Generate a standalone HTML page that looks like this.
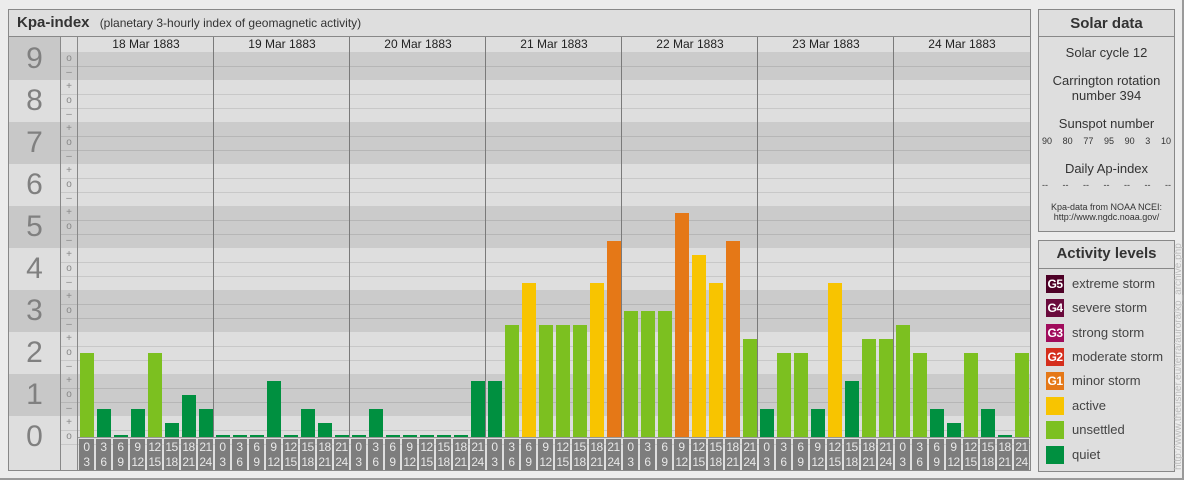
<!DOCTYPE html>
<html><head><meta charset="utf-8"><style>
*{margin:0;padding:0;box-sizing:border-box}
body{width:1184px;height:480px;background:#ececec;position:relative;overflow:hidden;font-family:"Liberation Sans",sans-serif;color:#333}
.a{position:absolute}
.d{background:#cbcbcb linear-gradient(to bottom,#b6b6b6 0 1px,transparent 1px 14px,#b6b6b6 14px 15px,transparent 15px) 0 14px/100% 28px no-repeat}
.l{background:#dedede linear-gradient(to bottom,#c8c8c8 0 1px,transparent 1px 14px,#c8c8c8 14px 15px,transparent 15px) 0 14px/100% 28px no-repeat}
.num{position:absolute;left:9px;width:51px;text-align:center;font-size:30px;color:#808080;line-height:34px}
.sl{position:absolute;left:61px;width:16px;text-align:center;font-size:10px;color:#888;line-height:14px;height:14px}
.vs{position:absolute;top:37px;height:400px;width:1px;background:#7a7a7a}
.dt{position:absolute;top:37px;height:14px;width:136px;text-align:center;font-size:12px;line-height:14px;color:#222}
.row{position:absolute;left:78px;display:flex}
.bars{top:52px;height:385px;align-items:flex-end}
.bars>div{width:17px;padding:0 1px 0 2px}
.bars i{display:block;width:14px}
.q{background:#009040}.u{background:#7cc020}.y{background:#f8c400}.o{background:#e57817}
.tl{top:439px;height:31px}
.tl>div{width:17px;padding-left:1px}
.tl span{display:block;width:15px;height:31px;background:#7d7d7d;color:#e8e8e8;font-size:12px;line-height:15px;text-align:center;padding-top:1px;letter-spacing:-0.5px}
.pc{position:absolute;left:1039px;width:135px;text-align:center;font-size:13px;color:#333}
.lg{position:absolute;left:1046px;width:18px;height:18px;color:#fff;font-size:12px;font-weight:bold;line-height:18px;text-align:center;letter-spacing:-0.5px}
.lt{position:absolute;left:1072px;font-size:13px;color:#444;line-height:18px}
</style></head><body>
<div class="a" style="left:0;top:0;width:1184px;height:480px;border-right:2px solid #9a9a9a;border-bottom:2px solid #9a9a9a"></div>
<div class="a" style="left:8px;top:9px;width:1023px;height:462px;border:1px solid #888;background:#dedede"></div>
<div class="a" style="left:9px;top:36px;width:1021px;height:1px;background:#888"></div>
<div class="a" style="left:17px;top:13px;font-size:15px;font-weight:bold;color:#333;line-height:20px">Kpa-index <span style="font-weight:normal;font-size:12px;margin-left:6px">(planetary 3-hourly index of geomagnetic activity)</span></div>
<div class="a" style="left:9px;top:37px;width:51px;height:43px;background:#c8c8c8"></div>
<div class="a" style="left:9px;top:122px;width:51px;height:42px;background:#c8c8c8"></div>
<div class="a" style="left:9px;top:206px;width:51px;height:42px;background:#c8c8c8"></div>
<div class="a" style="left:9px;top:290px;width:51px;height:42px;background:#c8c8c8"></div>
<div class="a" style="left:9px;top:374px;width:51px;height:42px;background:#c8c8c8"></div>
<div class="a d" style="left:61px;top:52px;width:969px;height:28px"></div>
<div class="a l" style="left:61px;top:80px;width:969px;height:42px"></div>
<div class="a d" style="left:61px;top:122px;width:969px;height:42px"></div>
<div class="a l" style="left:61px;top:164px;width:969px;height:42px"></div>
<div class="a d" style="left:61px;top:206px;width:969px;height:42px"></div>
<div class="a l" style="left:61px;top:248px;width:969px;height:42px"></div>
<div class="a d" style="left:61px;top:290px;width:969px;height:42px"></div>
<div class="a l" style="left:61px;top:332px;width:969px;height:42px"></div>
<div class="a d" style="left:61px;top:374px;width:969px;height:42px"></div>
<div class="a l" style="left:61px;top:416px;width:969px;height:54px"></div>
<div class="a" style="left:60px;top:37px;width:1px;height:433px;background:#888"></div>
<div class="a" style="left:77px;top:37px;width:1px;height:433px;background:#888"></div>
<div class="num" style="top:42px">9</div>
<div class="num" style="top:84px">8</div>
<div class="num" style="top:126px">7</div>
<div class="num" style="top:168px">6</div>
<div class="num" style="top:210px">5</div>
<div class="num" style="top:252px">4</div>
<div class="num" style="top:294px">3</div>
<div class="num" style="top:336px">2</div>
<div class="num" style="top:378px">1</div>
<div class="num" style="top:420px">0</div>
<div class="sl" style="top:52px">o</div><div class="sl" style="top:66px">–</div>
<div class="sl" style="top:80px">+</div><div class="sl" style="top:94px">o</div><div class="sl" style="top:108px">–</div>
<div class="sl" style="top:122px">+</div><div class="sl" style="top:136px">o</div><div class="sl" style="top:150px">–</div>
<div class="sl" style="top:164px">+</div><div class="sl" style="top:178px">o</div><div class="sl" style="top:192px">–</div>
<div class="sl" style="top:206px">+</div><div class="sl" style="top:220px">o</div><div class="sl" style="top:234px">–</div>
<div class="sl" style="top:248px">+</div><div class="sl" style="top:262px">o</div><div class="sl" style="top:276px">–</div>
<div class="sl" style="top:290px">+</div><div class="sl" style="top:304px">o</div><div class="sl" style="top:318px">–</div>
<div class="sl" style="top:332px">+</div><div class="sl" style="top:346px">o</div><div class="sl" style="top:360px">–</div>
<div class="sl" style="top:374px">+</div><div class="sl" style="top:388px">o</div><div class="sl" style="top:402px">–</div>
<div class="sl" style="top:416px">+</div><div class="sl" style="top:430px">o</div>
<div class="vs" style="left:213px"></div><div class="vs" style="left:349px"></div><div class="vs" style="left:485px"></div>
<div class="vs" style="left:621px"></div><div class="vs" style="left:757px"></div><div class="vs" style="left:893px"></div>
<div class="dt" style="left:78px">18 Mar 1883</div>
<div class="dt" style="left:214px">19 Mar 1883</div>
<div class="dt" style="left:350px">20 Mar 1883</div>
<div class="dt" style="left:486px">21 Mar 1883</div>
<div class="dt" style="left:622px">22 Mar 1883</div>
<div class="dt" style="left:758px">23 Mar 1883</div>
<div class="dt" style="left:894px">24 Mar 1883</div>
<div class="row bars">
<div><i class="u" style="height:84px"></i></div><div><i class="q" style="height:28px"></i></div><div><i class="q" style="height:2px"></i></div><div><i class="q" style="height:28px"></i></div><div><i class="u" style="height:84px"></i></div><div><i class="q" style="height:14px"></i></div><div><i class="q" style="height:42px"></i></div><div><i class="q" style="height:28px"></i></div>
<div><i class="q" style="height:2px"></i></div><div><i class="q" style="height:2px"></i></div><div><i class="q" style="height:2px"></i></div><div><i class="q" style="height:56px"></i></div><div><i class="q" style="height:2px"></i></div><div><i class="q" style="height:28px"></i></div><div><i class="q" style="height:14px"></i></div><div><i class="q" style="height:2px"></i></div>
<div><i class="q" style="height:2px"></i></div><div><i class="q" style="height:28px"></i></div><div><i class="q" style="height:2px"></i></div><div><i class="q" style="height:2px"></i></div><div><i class="q" style="height:2px"></i></div><div><i class="q" style="height:2px"></i></div><div><i class="q" style="height:2px"></i></div><div><i class="q" style="height:56px"></i></div>
<div><i class="q" style="height:56px"></i></div><div><i class="u" style="height:112px"></i></div><div><i class="y" style="height:154px"></i></div><div><i class="u" style="height:112px"></i></div><div><i class="u" style="height:112px"></i></div><div><i class="u" style="height:112px"></i></div><div><i class="y" style="height:154px"></i></div><div><i class="o" style="height:196px"></i></div>
<div><i class="u" style="height:126px"></i></div><div><i class="u" style="height:126px"></i></div><div><i class="u" style="height:126px"></i></div><div><i class="o" style="height:224px"></i></div><div><i class="y" style="height:182px"></i></div><div><i class="y" style="height:154px"></i></div><div><i class="o" style="height:196px"></i></div><div><i class="u" style="height:98px"></i></div>
<div><i class="q" style="height:28px"></i></div><div><i class="u" style="height:84px"></i></div><div><i class="u" style="height:84px"></i></div><div><i class="q" style="height:28px"></i></div><div><i class="y" style="height:154px"></i></div><div><i class="q" style="height:56px"></i></div><div><i class="u" style="height:98px"></i></div><div><i class="u" style="height:98px"></i></div>
<div><i class="u" style="height:112px"></i></div><div><i class="u" style="height:84px"></i></div><div><i class="q" style="height:28px"></i></div><div><i class="q" style="height:14px"></i></div><div><i class="u" style="height:84px"></i></div><div><i class="q" style="height:28px"></i></div><div><i class="q" style="height:2px"></i></div><div><i class="u" style="height:84px"></i></div>
</div>
<div class="a" style="left:78px;top:437px;width:952px;height:1px;background:#999"></div>
<div class="row tl">
<div><span>0<br>3</span></div><div><span>3<br>6</span></div><div><span>6<br>9</span></div><div><span>9<br>12</span></div><div><span>12<br>15</span></div><div><span>15<br>18</span></div><div><span>18<br>21</span></div><div><span>21<br>24</span></div>
<div><span>0<br>3</span></div><div><span>3<br>6</span></div><div><span>6<br>9</span></div><div><span>9<br>12</span></div><div><span>12<br>15</span></div><div><span>15<br>18</span></div><div><span>18<br>21</span></div><div><span>21<br>24</span></div>
<div><span>0<br>3</span></div><div><span>3<br>6</span></div><div><span>6<br>9</span></div><div><span>9<br>12</span></div><div><span>12<br>15</span></div><div><span>15<br>18</span></div><div><span>18<br>21</span></div><div><span>21<br>24</span></div>
<div><span>0<br>3</span></div><div><span>3<br>6</span></div><div><span>6<br>9</span></div><div><span>9<br>12</span></div><div><span>12<br>15</span></div><div><span>15<br>18</span></div><div><span>18<br>21</span></div><div><span>21<br>24</span></div>
<div><span>0<br>3</span></div><div><span>3<br>6</span></div><div><span>6<br>9</span></div><div><span>9<br>12</span></div><div><span>12<br>15</span></div><div><span>15<br>18</span></div><div><span>18<br>21</span></div><div><span>21<br>24</span></div>
<div><span>0<br>3</span></div><div><span>3<br>6</span></div><div><span>6<br>9</span></div><div><span>9<br>12</span></div><div><span>12<br>15</span></div><div><span>15<br>18</span></div><div><span>18<br>21</span></div><div><span>21<br>24</span></div>
<div><span>0<br>3</span></div><div><span>3<br>6</span></div><div><span>6<br>9</span></div><div><span>9<br>12</span></div><div><span>12<br>15</span></div><div><span>15<br>18</span></div><div><span>18<br>21</span></div><div><span>21<br>24</span></div>
</div>
<div class="a" style="left:1038px;top:9px;width:137px;height:223px;border:1px solid #888;background:#dedede"></div>
<div class="a" style="left:1039px;top:36px;width:135px;height:1px;background:#888"></div>
<div class="pc" style="top:14px;font-size:15px;font-weight:bold;line-height:20px">Solar data</div>
<div class="pc" style="top:45px;line-height:15px">Solar cycle 12</div>
<div class="pc" style="top:73px;line-height:15px">Carrington rotation<br>number 394</div>
<div class="pc" style="top:116px;line-height:15px">Sunspot number</div>
<div class="a" style="left:1042px;top:136px;width:129px;display:flex;justify-content:space-between;font-size:9px;color:#333;line-height:11px"><span>90</span><span>80</span><span>77</span><span>95</span><span>90</span><span>3</span><span>10</span></div>
<div class="pc" style="top:161px;line-height:15px">Daily Ap-index</div>
<div class="a" style="left:1042px;top:180px;width:129px;display:flex;justify-content:space-between;font-size:9px;color:#333;line-height:11px"><span>--</span><span>--</span><span>--</span><span>--</span><span>--</span><span>--</span><span>--</span></div>
<div class="pc" style="top:202px;font-size:9px;line-height:10px;color:#333">Kpa-data from NOAA NCEI:<br>http://www.ngdc.noaa.gov/</div>
<div class="a" style="left:1038px;top:240px;width:137px;height:232px;border:1px solid #888;background:#dedede"></div>
<div class="a" style="left:1039px;top:268px;width:135px;height:1px;background:#888"></div>
<div class="pc" style="top:244px;font-size:15px;font-weight:bold;line-height:20px">Activity levels</div>
<div class="lg" style="top:275px;background:#4d0026">G5</div><div class="lt" style="top:275px">extreme storm</div>
<div class="lg" style="top:299px;background:#6a0a3c">G4</div><div class="lt" style="top:299px">severe storm</div>
<div class="lg" style="top:324px;background:#a00c5c">G3</div><div class="lt" style="top:324px">strong storm</div>
<div class="lg" style="top:348px;background:#d52e1c">G2</div><div class="lt" style="top:348px">moderate storm</div>
<div class="lg" style="top:372px;background:#e57817">G1</div><div class="lt" style="top:372px">minor storm</div>
<div class="lg" style="top:397px;background:#f8c400"></div><div class="lt" style="top:397px">active</div>
<div class="lg" style="top:421px;background:#7cc020"></div><div class="lt" style="top:421px">unsettled</div>
<div class="lg" style="top:446px;background:#009040"></div><div class="lt" style="top:446px">quiet</div>
<div class="a" style="left:1179px;top:470px;transform-origin:0 0;transform:rotate(-90deg);font-size:10px;color:#bdbdbd;white-space:nowrap;line-height:10px;margin-left:-5px">http://www.theusner.eu/terra/aurora/kp_archive.php</div>
</body></html>
